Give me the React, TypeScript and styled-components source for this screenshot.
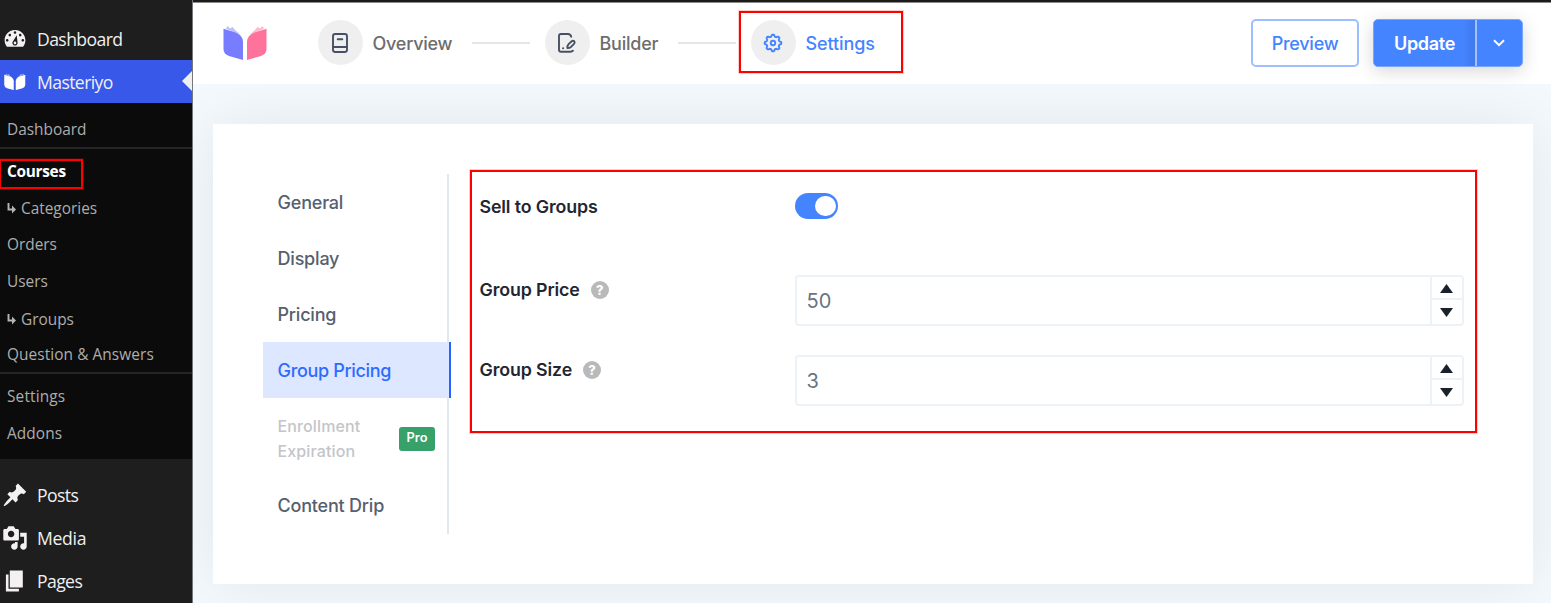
import React from "react";
import styled, { createGlobalStyle } from "styled-components";

const Global = createGlobalStyle`
  *, *::before, *::after { box-sizing: border-box; }
  body { margin: 0; background: #1e1e1e; }
`;

const Page = styled.div`
  position: relative;
  display: grid;
  grid-template-columns: 193px 1fr;
  width: 1551px;
  height: 603px;
  overflow: hidden;
  font-family: Inter, "Liberation Sans", sans-serif;
`;

/* ---------- admin sidebar ---------- */

const Sidebar = styled.nav`
  display: flex;
  flex-direction: column;
  padding-top: 17px;
  background: #1e1e1e;
  border-right: 1px solid #75777a;
  font-family: "Open Sans", "Noto Sans", sans-serif;
`;

const MenuItem = styled.div<{ $active?: boolean }>`
  position: relative;
  display: flex;
  flex: none;
  align-items: center;
  gap: 9px;
  height: 43px;
  padding-left: 2px;
  color: #f0f0f1;
  background: ${(p) => (p.$active ? "#3858e9" : "transparent")};
  font-size: 17.6px;
  svg { flex: none; fill: #f3f1f1; }
`;

const MenuLabel = styled.span<{ $spacing?: number }>`
  letter-spacing: ${(p) => p.$spacing ?? -0.6}px;
`;

const MenuIcon = styled.span`
  display: grid;
  place-items: center;
  width: 26px;
`;

const Pointer = styled.i`
  position: absolute;
  right: 0;
  top: 11px;
  border: 10px solid transparent;
  border-left-width: 0;
  border-right-color: #f0f0f1;
`;

const SubMenu = styled.div`
  display: flex;
  flex-direction: column;
  flex: none;
  height: 356px;
  padding-top: 8px;
  background: #0b0b0b;
`;

const SubItem = styled.div<{ $current?: boolean; $shift?: number; $spacing?: number }>`
  display: flex;
  align-items: center;
  flex: none;
  gap: 4px;
  height: 36px;
  margin-top: ${(p) => p.$shift ?? 0}px;
  padding-left: 7px;
  font-size: 15.4px;
  letter-spacing: ${(p) => p.$spacing ?? 0}px;
  font-weight: ${(p) => (p.$current ? 700 : 400)};
  color: ${(p) => (p.$current ? "#ffffff" : "#adadad")};
`;

const Divider = styled.hr`
  flex: none;
  width: 100%;
  height: 2px;
  margin: 0 0 4px;
  border: 0;
  background: #252525;
`;

const MenuTail = styled.div`
  padding-top: 14px;
`;

/* ---------- main column ---------- */

const Main = styled.main`
  display: flex;
  flex-direction: column;
  min-width: 0;
  overflow: hidden;
  border-top: 2px solid #1e1a1a;
  background: #f4f9fd;
`;

const Header = styled.header`
  position: relative;
  z-index: 1;
  display: flex;
  align-items: center;
  flex: none;
  height: 81.5px;
  padding: 0 28px 1px 30px;
  border-top: 1px solid #8d8d8d;
  background: #fff;
`;

const Steps = styled.div`
  display: flex;
  align-items: center;
  margin-left: 50.5px;
`;

const Step = styled.div<{ $active?: boolean; $width: number }>`
  display: flex;
  align-items: center;
  gap: 10px;
  width: ${(p) => p.$width}px;
  font-size: 18px;
  font-weight: 500;
  letter-spacing: ${(p) => (p.$active ? -0.1 : -0.24)}px;
  color: ${(p) => (p.$active ? "#4584ff" : "#6d6d6d")};
`;

const StepLabel = styled.span`
  padding-top: 2px;
`;

const StepIcon = styled.span`
  display: grid;
  place-items: center;
  flex: none;
  width: 45px;
  height: 45px;
  border-radius: 50%;
  background: #efefef;
  svg { margin-left: -1px; }
`;

const Connector = styled.span`
  width: 58px;
  height: 2px;
  margin: 0 15px 0 0;
  background: #e6e6e6;
`;

const Actions = styled.div`
  display: flex;
  gap: 14px;
  margin-left: auto;
`;

const PreviewButton = styled.button`
  width: 108px;
  height: 48px;
  padding: 1px 0 0;
  border: 2px solid #9dbfff;
  border-radius: 5px;
  background: #fff;
  color: #4584ff;
  font: 500 18px Inter, sans-serif;
  letter-spacing: -0.25px;
`;

const SplitButton = styled.div`
  display: flex;
  width: 150px;
  height: 48px;
  border: 1px solid #79a6ff;
  border-radius: 5px;
  background: #4584ff;
  box-shadow: 0 4px 18px rgba(0, 0, 0, 0.16);
`;

const UpdateButton = styled.button`
  width: 101px;
  padding: 1px 0 0;
  border: 0;
  border-radius: 4px 0 0 4px;
  background: linear-gradient(90deg, #4584ff 88%, #3f79eb);
  color: #fff;
  font: 600 18px Inter, sans-serif;
  letter-spacing: -0.3px;
`;

const CaretButton = styled.button`
  display: grid;
  place-items: center;
  flex: 1;
  padding: 0 2px 0 0;
  border: 0;
  border-left: 2px solid #a2c1ff;
  background: transparent;
`;

const Card = styled.section`
  display: flex;
  flex: none;
  width: 1320px;
  height: 460px;
  margin: 40px 0 0 19.5px;
  padding: 50px 55px 50px 50px;
  background: #fff;
  box-shadow: 0 0 60px rgba(0, 0, 0, 0.08);
`;

const Tabs = styled.div`
  display: flex;
  flex-direction: column;
  width: 186.5px;
  height: 360px;
  border-right: 2px solid #e2e8f0;
`;

const Tab = styled.div<{ $active?: boolean; $locked?: boolean }>`
  display: flex;
  align-items: center;
  justify-content: space-between;
  flex: none;
  width: ${(p) => (p.$active ? 188 : 185)}px;
  height: ${(p) => (p.$locked ? 79 : 56)}px;
  padding: ${(p) => (p.$locked ? "3px 12.5px 0 15px" : "2px 15px 0")};
  border-right: ${(p) => (p.$active ? "2px solid #2563ff" : "0")};
  background: ${(p) => (p.$active ? "#dde7ff" : "transparent")};
  color: ${(p) => (p.$active ? "#2e6bff" : p.$locked ? "#c3c5cb" : "#56606f")};
  font-size: ${(p) => (p.$locked ? 16 : 18)}px;
  letter-spacing: ${(p) => (p.$locked ? 0.13 : p.$active ? -0.33 : -0.2)}px;
  line-height: ${(p) => (p.$locked ? 25 : 28)}px;
  font-weight: 500;
`;

const ProBadge = styled.span`
  width: 36px;
  height: 24px;
  border-radius: 3px;
  background: #38a169;
  color: #fff;
  font-size: 12.8px;
  font-weight: 600;
  line-height: 22px;
  text-align: center;
`;

const Form = styled.div`
  display: flex;
  flex-direction: column;
  gap: 30px;
  flex: 1;
  padding: 19.5px 14px 0 30.5px;
`;

const Field = styled.div<{ $height: number }>`
  display: grid;
  grid-template-columns: 315px 1fr;
  height: ${(p) => p.$height}px;
`;

const FieldLabel = styled.label<{ $drop?: number }>`
  display: flex;
  align-items: center;
  gap: 11px;
  height: 26px;
  margin-top: ${(p) => p.$drop ?? 0}px;
  color: #1f2733;
  font-size: 17.8px;
  letter-spacing: -0.12px;
  font-weight: 600;
`;

const Toggle = styled.span`
  display: flex;
  justify-content: flex-end;
  width: 43px;
  height: 25.5px;
  padding: 2.5px 2px;
  border-radius: 13px;
  background: #4584ff;
  &::after {
    content: "";
    width: 20.5px;
    height: 20.5px;
    border-radius: 50%;
    background: #fff;
  }
`;

const HelpDot = styled.span`
  display: grid;
  place-items: center;
  width: 18px;
  height: 18px;
  margin-top: 1px;
  border-radius: 50%;
  background: #b9b9b9;
  color: #fff;
  font-size: 13px;
  font-weight: 800;
  line-height: 18px;
`;

const NumberInput = styled.div`
  display: flex;
  width: 669px;
  height: 51px;
  border: 2px solid #edf2f7;
  border-radius: 4px;
  color: #6a7482;
  font-size: 20px;
`;

const Value = styled.span`
  flex: 1;
  padding-left: 10px;
  line-height: 48px;
`;

const Stepper = styled.span`
  display: grid;
  grid-template-rows: 21px 1fr;
  width: 32px;
  border-left: 2px solid #edf2f7;
`;

const StepArrow = styled.span<{ $down?: boolean }>`
  display: grid;
  place-items: center;
  border-top: ${(p) => (p.$down ? "2px solid #edf2f7" : "0")};
  padding-top: ${(p) => (p.$down ? 0 : 1)}px;
  svg { transform: ${(p) => (p.$down ? "rotate(180deg)" : "none")}; }
`;

/* Annotation frame lying over the page. */
const Highlight = styled.div<{ $x: number; $y: number; $w: number; $h: number }>`
  position: absolute;
  z-index: 2;
  left: ${(p) => p.$x}px;
  top: ${(p) => p.$y}px;
  width: ${(p) => p.$w}px;
  height: ${(p) => p.$h}px;
  border: 2px solid #fd0000;
  box-shadow: 0 0 0 1px rgba(253, 0, 0, 0.2);
`;

/* ---------- icons ---------- */

const Dashicon = ({ d }: { d: string }) => (
  <svg width="26" height="26" viewBox="0 0 20 20" fillRule="evenodd"><path d={d} /></svg>
);

const dashboardPath =
  "M3.76 16h12.48c1.1-1.37 1.76-3.11 1.76-5 0-4.42-3.58-8-8-8s-8 3.58-8 8c0 1.89.66 3.63 1.76 5zM10 4c.55 0 1 .45 1 1s-.45 1-1 1-1-.45-1-1 .45-1 1-1zM6 6c.55 0 1 .45 1 1s-.45 1-1 1-1-.45-1-1 .45-1 1-1zm8 0c.55 0 1 .45 1 1s-.45 1-1 1-1-.45-1-1 .45-1 1-1zm-2.7 1.2L12 13c0 1.1-.9 2-2 2s-2-.9-2-2c0-.57.24-1.08.63-1.45zM4 10c.55 0 1 .45 1 1s-.45 1-1 1-1-.45-1-1 .45-1 1-1zm12 0c.55 0 1 .45 1 1s-.45 1-1 1-1-.45-1-1 .45-1 1-1zm-5 3c0-.55-.45-1-1-1s-1 .45-1 1 .45 1 1 1 1-.45 1-1z";
const pinPath =
  "M10.44 3.02l1.82-1.82 6.36 6.35-1.83 1.82c-1.05-.68-2.48-.57-3.41.36l-.75.75c-.92.93-1.04 2.35-.35 3.41l-1.83 1.82-2.41-2.41-2.8 2.79c-.42.42-3.38 2.71-3.8 2.29s1.86-3.39 2.28-3.81l2.79-2.79L4.1 9.36l1.83-1.82c1.05.69 2.48.57 3.4-.36l.75-.75c.93-.92 1.05-2.35.36-3.41z";
const mediaPath =
  "M13 11V4c0-.55-.45-1-1-1h-1.67L9 1H5L3.67 3H2c-.55 0-1 .45-1 1v7c0 .55.45 1 1 1h10c.55 0 1-.45 1-1zM7 4.5c1.38 0 2.5 1.12 2.5 2.5S8.38 9.5 7 9.5 4.5 8.38 4.5 7 5.62 4.5 7 4.5zM14 6h5v10.5c0 1.38-1.12 2.5-2.5 2.5S14 17.88 14 16.5s1.12-2.5 2.5-2.5c.17 0 .34.02.5.05V9h-3V6zm-4 8.05V13h2v3.5c0 1.38-1.12 2.5-2.5 2.5S7 17.88 7 16.5 8.12 14 9.5 14c.17 0 .34.02.5.05z";
const pagesPath = "M6 15V2h10v13H6zm-1 1h8v2H3V5h2v11z";

const Book = ({ width, left, right }: { width: number; left: string; right: string }) => (
  <svg width={width} height={(width * 36) / 44} viewBox="0 0 44 36">
    <path style={{ fill: left }} d="M0.5 3.7L12 7.2Q20 10 20 17V35L6 31Q.5 29 .5 24Z" />
    <path style={{ fill: left }} opacity=".5" d="M3 3.8L4.5 1l2.5 2.5L9.5 2l3 3.5L17.5 9.5Z" />
    <path style={{ fill: right }} d="M43.5 3.7L32 7.2Q24 10 24 17V35L38 31Q43.5 29 43.5 24Z" />
    <path style={{ fill: right }} opacity=".5" d="M41 3.8L39.5 1l-2.5 2.5L34.5 2l-3 3.5L26.5 9.5Z" />
  </svg>
);

const OverviewIcon = () => (
  <svg width="22" height="22" viewBox="0 0 22 22" fill="none" stroke="#475063" strokeWidth="1.9" strokeLinecap="round">
    <rect x="4" y="2" width="14" height="18" rx="2.2" />
    <path d="M4.5 15H17.5M8.7 7.3H13.3" />
  </svg>
);

const BuilderIcon = () => (
  <svg width="22" height="22" viewBox="0 0 22 22" fill="none" stroke="#475063" strokeWidth="1.9" strokeLinecap="round" strokeLinejoin="round">
    <path d="M15.2 4.8Q14.6 2 12 2H5Q3 2 3 4V17.7Q3 19.7 5 19.7H14.5Q16.2 19.7 17 18.7" />
    <path d="M11.4 16Q11.2 13.6 12.6 12.1L15.7 9.2Q17 8.1 18.3 9.3Q19.2 10.5 18 11.9L15 14.9Q13.5 16.1 11.4 16Z" />
    <path d="M7 16.2H7.2" />
  </svg>
);

const gearPath =
  Array.from({ length: 96 }, (_, i) => {
    const a = (i / 96) * Math.PI * 2;
    const r = 7.4 + 0.95 * Math.tanh(2 * Math.cos(8 * a));
    return `${i ? "L" : "M"}${(11 + r * Math.cos(a)).toFixed(2)} ${(11 + r * Math.sin(a)).toFixed(2)}`;
  }).join("") + "Z";

const GearIcon = () => (
  <svg width="22" height="22" viewBox="0 0 22 22" fill="none" stroke="#4584ff" strokeWidth="1.9" strokeLinejoin="round">
    <path d={gearPath} />
    <circle cx="11" cy="11" r="2.2" />
  </svg>
);

const Triangle = () => (
  <svg width="13" height="9" viewBox="0 0 13 9"><path d="M6.5 0L13 9H0Z" fill="#1a202c" /></svg>
);

const SubArrow = () => (
  <svg width="10" height="12" viewBox="0 0 10 12" fill="none" stroke="#b5b5b5" strokeWidth="1.9">
    <path d="M1.5 1V7.5H6" />
    <path d="M5 3.5L9 7.5L5 11.5Z" fill="#b5b5b5" stroke="none" />
  </svg>
);

const NumberField = ({ label, value }: { label: string; value: string }) => (
  <Field $height={50}>
    <FieldLabel $drop={1}>
      {label}
      <HelpDot>?</HelpDot>
    </FieldLabel>
    <NumberInput>
      <Value>{value}</Value>
      <Stepper>
        <StepArrow><Triangle /></StepArrow>
        <StepArrow $down><Triangle /></StepArrow>
      </Stepper>
    </NumberInput>
  </Field>
);

export default function App() {
  return (
    <>
      <Global />
      <Page>
        <Sidebar>
          <MenuItem><Dashicon d={dashboardPath} /><MenuLabel>Dashboard</MenuLabel></MenuItem>
          <MenuItem $active>
            <MenuIcon><Book width={21.5} left="#fff" right="#fff" /></MenuIcon>
            <MenuLabel>Masteriyo</MenuLabel>
            <Pointer />
          </MenuItem>
          <SubMenu>
            <SubItem>Dashboard</SubItem>
            <Divider />
            <SubItem $current $spacing={-0.3}>Courses</SubItem>
            <SubItem $shift={1}><SubArrow />Categories</SubItem>
            <SubItem>Orders</SubItem>
            <SubItem $shift={1}>Users</SubItem>
            <SubItem $shift={2}><SubArrow />Groups</SubItem>
            <SubItem $shift={-1} $spacing={0.08}>Question &amp; Answers</SubItem>
            <Divider />
            <SubItem $spacing={0.15}>Settings</SubItem>
            <SubItem $shift={1} $spacing={0.1}>Addons</SubItem>
          </SubMenu>
          <MenuTail>
            <MenuItem><Dashicon d={pinPath} /><MenuLabel>Posts</MenuLabel></MenuItem>
            <MenuItem><Dashicon d={mediaPath} /><MenuLabel $spacing={-0.3}>Media</MenuLabel></MenuItem>
            <MenuItem><Dashicon d={pagesPath} /><MenuLabel>Pages</MenuLabel></MenuItem>
          </MenuTail>
        </Sidebar>

        <Main>
          <Header>
            <Book width={44} left="#787dff" right="#fd739c" />
            <Steps>
              <Step $width={154}><StepIcon><OverviewIcon /></StepIcon><StepLabel>Overview</StepLabel></Step>
              <Connector />
              <Step $width={133}><StepIcon><BuilderIcon /></StepIcon><StepLabel>Builder</StepLabel></Step>
              <Connector />
              <Step $active $width={140}><StepIcon><GearIcon /></StepIcon><StepLabel>Settings</StepLabel></Step>
            </Steps>
            <Actions>
              <PreviewButton>Preview</PreviewButton>
              <SplitButton>
                <UpdateButton>Update</UpdateButton>
                <CaretButton>
                  <svg width="12" height="8" viewBox="0 0 12 8" fill="none" stroke="#fff" strokeWidth="2">
                    <path d="M1 1.2L6 6.2L11 1.2" />
                  </svg>
                </CaretButton>
              </SplitButton>
            </Actions>
          </Header>

          <Card>
            <Tabs>
              <Tab>General</Tab>
              <Tab>Display</Tab>
              <Tab>Pricing</Tab>
              <Tab $active>Group Pricing</Tab>
              <Tab $locked><span>Enrollment<br />Expiration</span><ProBadge>Pro</ProBadge></Tab>
              <Tab>Content Drip</Tab>
            </Tabs>
            <Form>
              <Field $height={52}>
                <FieldLabel>Sell to Groups</FieldLabel>
                <Toggle />
              </Field>
              <NumberField label="Group Price" value="50" />
              <NumberField label="Group Size" value="3" />
            </Form>
          </Card>
        </Main>

        <Highlight $x={-1} $y={159} $w={84} $h={30} />
        <Highlight $x={739} $y={11} $w={164} $h={62} />
        <Highlight $x={470} $y={170} $w={1007} $h={263} />
      </Page>
    </>
  );
}
